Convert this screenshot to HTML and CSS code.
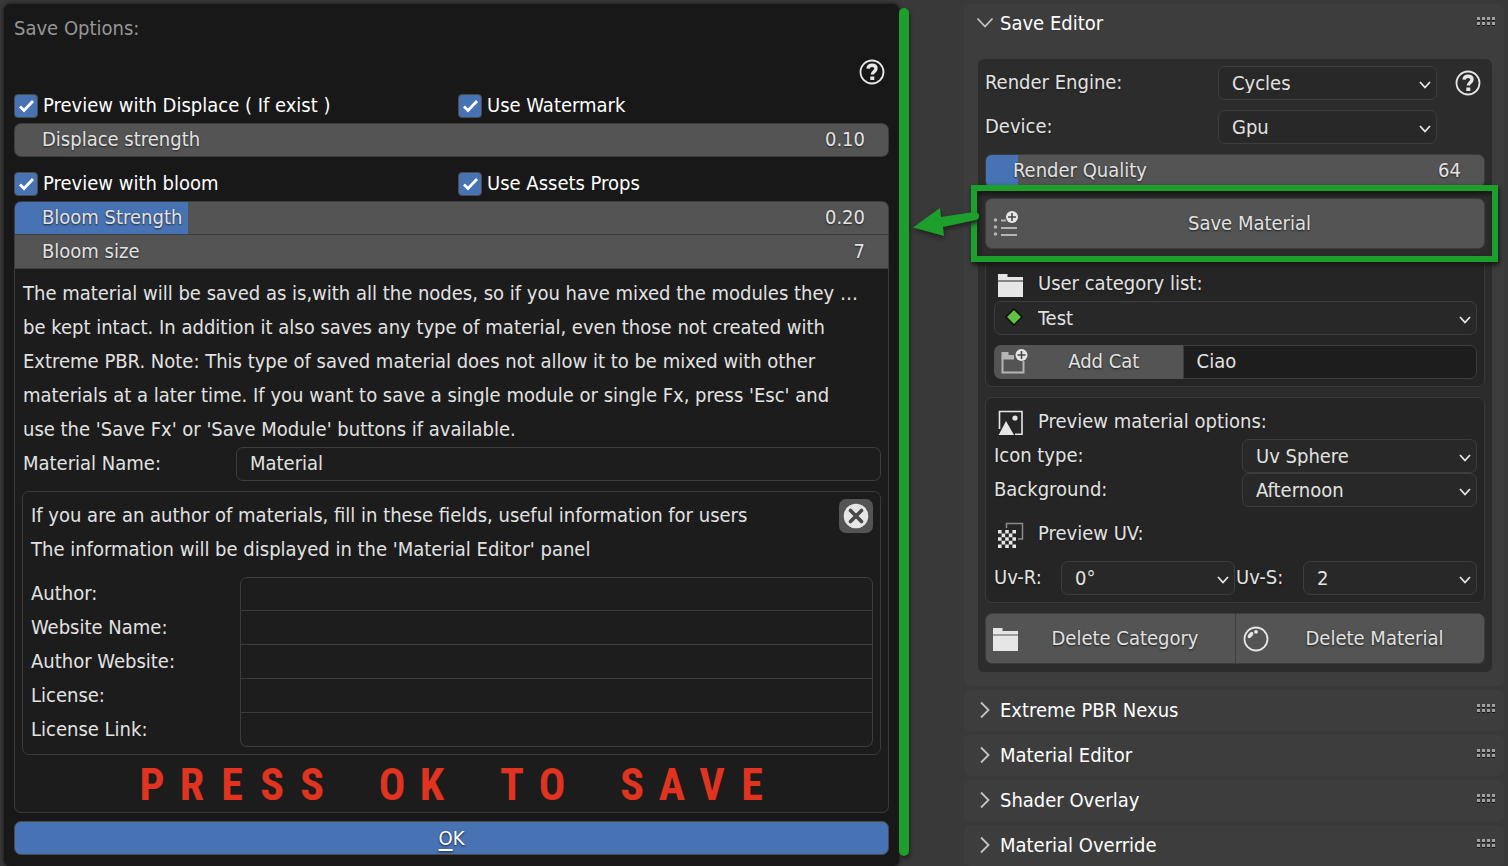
FILE: index.html
```html
<!DOCTYPE html>
<html lang="en">
<head>
<meta charset="utf-8">
<title>Save Options</title>
<link rel="stylesheet" href="styles.css">
</head>
<body>
<svg width="0" height="0" class="defs" aria-hidden="true">
  <symbol id="help" viewBox="0 0 26 26">
    <circle cx="13" cy="13" r="11.500" fill="none" stroke="#e6e6e6" stroke-width="1.800"/>
    <path d="M9 9.600C9.300 7.200 10.800 6.200 13 6.200C15.500 6.200 17 7.500 17 9.600C17 12.300 13.300 12.600 13.300 15.600" fill="none" stroke="#e6e6e6" stroke-width="3.400"/>
    <rect x="11.300" y="17.500" width="4" height="3.500" fill="#e6e6e6"/>
  </symbol>
  <symbol id="folder" viewBox="0 0 26 24">
    <path d="M0 1h9.500v3H25v3.500H0z M0 8.500h25V24H0z" fill="#e6e6e6"/>
  </symbol>
  <symbol id="down" viewBox="0 0 18 12">
    <path d="M1.500 1.500L9 9.500L16.500 1.500" fill="none" stroke="#c4c4c4" stroke-width="1.800"/>
  </symbol>
  <symbol id="right" viewBox="0 0 12 18">
    <path d="M2 1.500L9.500 9L2 16.500" fill="none" stroke="#c4c4c4" stroke-width="1.800"/>
  </symbol>
  <symbol id="grip" viewBox="0 0 18 9">
    <path d="M0 3.500h18M0 8.500h18" stroke="#161616" stroke-width="1" stroke-dasharray="3 2"/>
    <path d="M0 1.500h18M0 6.500h18" stroke="#a0a0a0" stroke-width="3" stroke-dasharray="3 2"/>
  </symbol>
</svg>
<main class="screen">
  <form class="dialog">
    <h1 class="title">Save Options:</h1>
    <div class="help-row"><button type="button" class="icon-btn" aria-label="Help"><svg width="26" height="26"><use href="#help"/></svg></button></div>
    <div class="checks">
      <label class="check"><input type="checkbox" checked>Preview with Displace ( If exist )</label>
      <label class="check"><input type="checkbox" checked>Use Watermark</label>
    </div>
    <div class="slider round">
      <input type="range" id="displace" min="0" max="100" value="0" style="--fill:0%">
      <label for="displace">Displace strength</label><output for="displace">0.10</output>
    </div>
    <div class="checks spaced">
      <label class="check"><input type="checkbox" checked>Preview with bloom</label>
      <label class="check"><input type="checkbox" checked>Use Assets Props</label>
    </div>
    <div class="slider top">
      <input type="range" id="bloom" min="0" max="100" value="20" style="--fill:19.8%">
      <label for="bloom">Bloom Strength</label><output for="bloom">0.20</output>
    </div>
    <div class="slider joined">
      <input type="range" id="size" min="0" max="100" value="0" style="--fill:0%">
      <label for="size">Bloom size</label><output for="size">7</output>
    </div>
    <section class="info">
      <p class="line">The material will be saved as is,with all the nodes, so if you have mixed the modules they …</p>
      <p class="line">be kept intact. In addition it also saves any type of material, even those not created with</p>
      <p class="line">Extreme PBR. Note: This type of saved material does not allow it to be mixed with other</p>
      <p class="line">materials at a later time. If you want to save a single module or single Fx, press 'Esc' and</p>
      <p class="line">use the 'Save Fx' or 'Save Module' buttons if available.</p>
      <div class="field">
        <label for="name">Material Name:</label>
        <input class="text" id="name" type="text" value="Material">
      </div>
      <div class="author">
        <div class="author-head">
          <div>
            <p class="line">If you are an author of materials, fill in these fields, useful information for users</p>
            <p class="line">The information will be displayed in the 'Material Editor' panel</p>
          </div>
          <button type="button" class="close" aria-label="Close">
            <svg width="26" height="26" viewBox="0 0 26 26"><circle cx="13" cy="13" r="12.300" fill="#e6e6e6"/><path d="M7.500 7.500L18.500 18.500M18.500 7.500L7.500 18.500" stroke="#484848" stroke-width="3.600" stroke-linecap="round"/></svg>
          </button>
        </div>
        <div class="stack">
          <div class="field"><label for="f1">Author:</label><input class="text" id="f1" type="text"></div>
          <div class="field"><label for="f2">Website Name:</label><input class="text" id="f2" type="text"></div>
          <div class="field"><label for="f3">Author Website:</label><input class="text" id="f3" type="text"></div>
          <div class="field"><label for="f4">License:</label><input class="text" id="f4" type="text"></div>
          <div class="field"><label for="f5">License Link:</label><input class="text" id="f5" type="text"></div>
        </div>
      </div>
      <p class="press">
        <span>P</span><span>R</span><span>E</span><span>S</span><span>S</span><span> </span><span>O</span><span>K</span><span> </span><span>T</span><span>O</span><span> </span><span>S</span><span>A</span><span>V</span><span>E</span>
      </p>
    </section>
    <button type="button" class="ok"><span class="key">O</span>K</button>
  </form>

  <div class="gutter"><div class="bar"></div></div>

  <aside class="sidebar">
    <section class="panel open">
      <button type="button" class="head"><svg class="arrow" width="18" height="12"><use href="#down"/></svg><span>Save Editor</span><svg class="grip" width="18" height="9"><use href="#grip"/></svg></button>
      <div class="box">
        <div class="engine">
          <label for="engine">Render Engine:</label>
          <select id="engine"><option>Cycles</option></select>
          <button type="button" class="icon-btn" aria-label="Help"><svg width="26" height="26"><use href="#help"/></svg></button>
        </div>
        <div class="engine">
          <label for="device">Device:</label>
          <select id="device"><option>Gpu</option></select>
        </div>
        <div class="slider round">
          <input type="range" id="quality" min="0" max="1000" value="64" style="--fill:6.4%">
          <label for="quality">Render Quality</label><output for="quality">64</output>
        </div>
        <div class="save">
          <button type="button" class="action">
            <svg width="26" height="28" viewBox="0 0 26 28"><g fill="#b4b4b4"><circle cx="2.500" cy="10" r="1.800"/><circle cx="2.500" cy="17" r="1.800"/><circle cx="2.500" cy="24" r="1.800"/></g><path d="M8 10.500h5M8 18h16M8 25h16" stroke="#b4b4b4" stroke-width="2"/><circle cx="19" cy="7" r="6" fill="#e6e6e6"/><path d="M19 3v8M15 7h8" stroke="#484848" stroke-width="1.600"/></svg>
            <span>Save Material</span>
          </button>
          <div class="highlight"></div>
          <svg class="pointer" width="70" height="34" viewBox="0 0 70 34"><path d="M1 18.500L28 -1L29 8L62 3C68 2.500 69 9 64 11L31 18L32 27Z" fill="#1c9f2b"/></svg>
        </div>
        <div class="sub">
          <div class="caption"><svg width="26" height="24"><use href="#folder"/></svg><label for="cat">User category list:</label></div>
          <div class="with-icon">
            <select id="cat"><option>Test</option></select>
            <svg class="gem" width="20" height="20" viewBox="0 0 20 20"><path d="M10 2L18 10L10 18L2 10Z" fill="#62c043" stroke="#0a0f08" stroke-width="1.500"/></svg>
          </div>
          <div class="add">
            <button type="button">
              <svg width="28" height="28" viewBox="0 0 28 28"><path d="M1.500 11V25.500H22.500V14M1.500 11.500H13" fill="none" stroke="#b4b4b4" stroke-width="2"/><path d="M.5 5h7v3H13v4H.5z" fill="#b4b4b4"/><circle cx="20.500" cy="8" r="6" fill="#e6e6e6"/><path d="M20.500 4v8M16.500 8h8" stroke="#484848" stroke-width="1.600"/></svg>
              <span>Add Cat</span>
            </button>
            <input class="text" type="text" value="Ciao" aria-label="Category name">
          </div>
        </div>
        <div class="sub">
          <div class="caption"><svg width="26" height="26" viewBox="0 0 26 26"><path d="M1.500 19V1.500H24V24.300H17" fill="none" stroke="#e6e6e6" stroke-width="1.600"/><path d="M8 11L16 25H.7Z" fill="#e6e6e6"/><circle cx="17" cy="8" r="2.600" fill="#e6e6e6"/></svg><span>Preview material options:</span></div>
          <div class="half"><label for="icon">Icon type:</label><select id="icon"><option>Uv Sphere</option></select></div>
          <div class="half"><label for="bg">Background:</label><select id="bg"><option>Afternoon</option></select></div>
          <div class="caption spaced"><svg width="26" height="26" viewBox="0 0 26 26"><path d="M8.500 6V1.500H24.500V17H20" fill="none" stroke="#8c8c8c" stroke-width="1.500"/><path d="M0 9.800h18M0 17h18M0 24.200h18" stroke="#e6e6e6" stroke-width="3.600" stroke-dasharray="3.600 3.600"/><path d="M3.600 13.400h14.400M3.600 20.600h14.400" stroke="#e6e6e6" stroke-width="3.600" stroke-dasharray="3.600 3.600"/></svg><span>Preview UV:</span></div>
          <div class="uv">
            <label for="uvr">Uv-R:</label><select id="uvr"><option>0°</option></select>
            <label for="uvs">Uv-S:</label><select id="uvs"><option>2</option></select>
          </div>
        </div>
        <div class="deletes">
          <button type="button" class="action"><svg width="26" height="24"><use href="#folder"/></svg><span>Delete Category</span></button>
          <button type="button" class="action"><svg width="26" height="26" viewBox="0 0 26 26"><circle cx="13" cy="13" r="11.500" fill="none" stroke="#e6e6e6" stroke-width="1.800"/><ellipse cx="7.500" cy="9" rx="1.900" ry="3.600" transform="rotate(40 7.500 9)" fill="#e6e6e6"/><circle cx="13" cy="5.800" r="1.900" fill="#e6e6e6"/></svg><span>Delete Material</span></button>
        </div>
      </div>
    </section>
    <section class="panel"><button type="button" class="head"><svg class="arrow" width="12" height="18"><use href="#right"/></svg><span>Extreme PBR Nexus</span><svg class="grip" width="18" height="9"><use href="#grip"/></svg></button></section>
    <section class="panel"><button type="button" class="head"><svg class="arrow" width="12" height="18"><use href="#right"/></svg><span>Material Editor</span><svg class="grip" width="18" height="9"><use href="#grip"/></svg></button></section>
    <section class="panel"><button type="button" class="head"><svg class="arrow" width="12" height="18"><use href="#right"/></svg><span>Shader Overlay</span><svg class="grip" width="18" height="9"><use href="#grip"/></svg></button></section>
    <section class="panel"><button type="button" class="head"><svg class="arrow" width="12" height="18"><use href="#right"/></svg><span>Material Override</span><svg class="grip" width="18" height="9"><use href="#grip"/></svg></button></section>
  </aside>
</main>
</body>
</html>
```

FILE: styles.css
```css
* { box-sizing: border-box; }
body {
  margin: 0;
  background: #393939;
  color: #e2e2e2;
  font: 20px/32px "DejaVu Sans Condensed", "DejaVu Sans", sans-serif;
}
.defs { position: absolute; }
svg { display: block; flex: none; }
h1, p { margin: 0; font-size: inherit; font-weight: normal; }
button, input, select {
  margin: 0;
  padding: 0;
  border: 0;
  color: inherit;
  font: inherit;
  background: none;
  border-radius: 0;
}
.screen {
  display: grid;
  grid-template-columns: minmax(0, 895fr) 65px minmax(0, 540fr);
  padding: 4px 4px 0;
}

/* Dialog */
.dialog {
  display: flex;
  flex-direction: column;
  padding: 8px 10px 10px;
  background: #181818;
  border-radius: 6px;
  box-shadow: 0 0 4px #111;
}
.title { color: #969696; height: 34px; margin-bottom: 9px; }
.help-row { display: flex; justify-content: flex-end; align-items: center; height: 34px; padding-right: 4px; }
.checks { display: grid; grid-template-columns: 1fr 1fr; column-gap: 13px; color: #fff; }
.checks.spaced { margin-top: 10px; }
.check { display: flex; align-items: flex-start; gap: 5px; height: 34px; }
.check input {
  appearance: none;
  width: 24px;
  height: 24px;
  margin-top: 5px;
  border: 1px solid #4a4a4a;
  border-radius: 4px;
  background: #4772b3 url("data:image/svg+xml,%3Csvg xmlns='http://www.w3.org/2000/svg' viewBox='0 0 22 22'%3E%3Cpath d='M5 11.500L9 15.500L18 6' fill='none' stroke='white' stroke-width='2.800'/%3E%3C/svg%3E") center / 22px 22px no-repeat;
}
.slider {
  position: relative;
  display: flex;
  justify-content: space-between;
  height: 34px;
  padding: 0 24px 0 28px;
  text-shadow: 0 1px 2px #222;
}
.slider input {
  position: absolute;
  inset: 0;
  width: 100%;
  height: 100%;
  appearance: none;
  border: 1px solid #3d3d3d;
  background: linear-gradient(to right, #4772b3 var(--fill), #545454 var(--fill));
}
.slider input::-webkit-slider-thumb { appearance: none; width: 1px; height: 1px; opacity: 0; }
.slider label, .slider output { position: relative; pointer-events: none; }
.slider.round input { border-radius: 7px; }
.slider.top input { border-radius: 7px 7px 0 0; }
.slider.joined input { border-top: 0; }
.info {
  padding: 8px 7px 0 8px;
  border: 1px solid #3a3a3a;
  border-top: 0;
  border-radius: 0 0 7px 7px;
  background: #1c1c1c;
}
.line { height: 34px; white-space: nowrap; }
.field { display: grid; grid-template-columns: minmax(0, 213fr) minmax(0, 645fr); height: 34px; }
.stack .field { grid-template-columns: minmax(0, 209fr) minmax(0, 633fr); }
.text {
  width: 100%;
  height: 34px;
  padding: 0 13px 2px;
  border: 1px solid #3d3d3d;
  border-radius: 7px;
  background: #1d1d1d;
}
.author { margin: 10px 0 0 -1px; padding: 7px 7px 7px 8px; border: 1px solid #3a3a3a; border-radius: 7px; }
.author-head { display: flex; justify-content: space-between; align-items: flex-start; margin-bottom: 10px; }
.close { display: grid; place-items: center; flex: none; width: 34px; height: 34px; border-radius: 7px; background: #545454; }
.stack .text { border-radius: 0; }
.stack .field + .field .text { border-top: 0; }
.stack .field:first-child .text { border-radius: 7px 7px 0 0; }
.stack .field:last-child .text { border-radius: 0 0 7px 7px; }
.press {
  display: grid;
  grid-template-columns: repeat(16, 40px);
  justify-content: center;
  height: 57px;
  color: #e03420;
  text-align: center;
  font: bold 44px/60px "Liberation Sans Narrow", "Roboto Condensed", "Open Sans Condensed", "Noto Sans", sans-serif;
}
.ok {
  height: 34px;
  margin-top: 8px;
  padding-bottom: 6px;
  border: 1px solid #4a4a4a;
  border-radius: 7px;
  background: #4772b3;
  color: #fff;
  text-shadow: 0 1px 2px #222;
}
.key { text-decoration: underline 2px; text-underline-offset: 4px; }

/* Marker beside the dialog */
.gutter { padding: 4px 0 10px; display: flex; }
.bar { width: 10px; border-radius: 5px; background: #1c9f2b; box-shadow: 1px 3px 4px #222; }

/* Sidebar */
.sidebar { display: flex; flex-direction: column; gap: 4px; text-shadow: 0 1px 2px #1c1c1c; }
.panel { background: #3d3d3d; border-radius: 6px; }
.panel.open { padding-bottom: 14px; }
.head { display: flex; align-items: center; width: 100%; height: 41px; padding: 0 9px 2px 15px; color: #fff; text-align: left; }
.open .head { height: 39px; padding-left: 12px; }
.head span { flex: 1; }
.arrow { margin-right: 9px; }
.open .arrow { margin-right: 6px; }
.grip { margin-bottom: 3px; }
.box {
  display: flex;
  flex-direction: column;
  gap: 10px;
  margin: 16px 12px 0 14px;
  padding: 7px 7px 8px;
  border-radius: 6px;
  background: #2c2c2c;
}
.icon-btn { justify-self: end; align-self: center; }
.engine { display: grid; grid-template-columns: 233fr 219fr 48fr; height: 34px; }
.engine .icon-btn { margin-right: 4px; }
select {
  width: 100%;
  height: 34px;
  padding: 0 30px 6px 13px;
  appearance: none;
  border: 1px solid #3d3d3d;
  border-radius: 7px;
  background: #282828 url("data:image/svg+xml,%3Csvg xmlns='http://www.w3.org/2000/svg' viewBox='0 0 12 8'%3E%3Cpath d='M1 1L6 6.500L11 1' fill='none' stroke='%23e6e6e6' stroke-width='1.800'/%3E%3C/svg%3E") right 5px top 14px / 12px 8px no-repeat;
}
.save { position: relative; display: grid; }
.action {
  display: flex;
  align-items: center;
  height: 51px;
  padding: 0 4px 2px 7px;
  border: 1px solid #3d3d3d;
  border-radius: 7px;
  background: #545454;
  text-shadow: inherit;
}
.action span, .add button span { flex: 1; text-align: center; }
.action svg { margin-top: 3px; }
.highlight {
  position: absolute;
  inset: -13px -13px -13px -14px;
  border: 6px solid #1c9f2b;
  box-shadow: 1px 3px 5px #151515, inset 1px 3px 5px #151515;
  pointer-events: none;
}
.pointer { position: absolute; left: -73px; top: 11px; filter: drop-shadow(1px 3px 2px #222); overflow: visible; }
.sub { padding: 7px 7px 7px 8px; border: 1px solid #3a3a3a; border-radius: 7px; background: #252525; }
.caption { display: flex; align-items: center; gap: 14px; height: 34px; padding: 0 0 2px 4px; }
.caption svg { margin-top: 3px; }
.caption.spaced { margin: 10px 0; }
.with-icon { position: relative; margin: 0 0 10px; }
.with-icon select { padding-left: 43px; }
.gem { position: absolute; left: 10px; top: 6px; }
.add { display: grid; grid-template-columns: 189fr 295fr; }
.add button { display: flex; align-items: center; height: 34px; padding: 0 4px 2px 7px; border-radius: 7px 0 0 7px; background: #545454; text-shadow: inherit; }
.add .text { border-radius: 0 7px 7px 0; }
.half { display: grid; grid-template-columns: 248fr 235fr; height: 34px; }
.uv { display: grid; grid-template-columns: 67fr 174fr 68fr 174fr; }
.uv label:nth-of-type(2) { padding-left: 1px; }
.deletes { display: grid; grid-template-columns: 1fr 1fr; }
.deletes .action:first-child { border-radius: 7px 0 0 7px; border-right: 0; }
.deletes .action:last-child { border-radius: 0 7px 7px 0; }
```
